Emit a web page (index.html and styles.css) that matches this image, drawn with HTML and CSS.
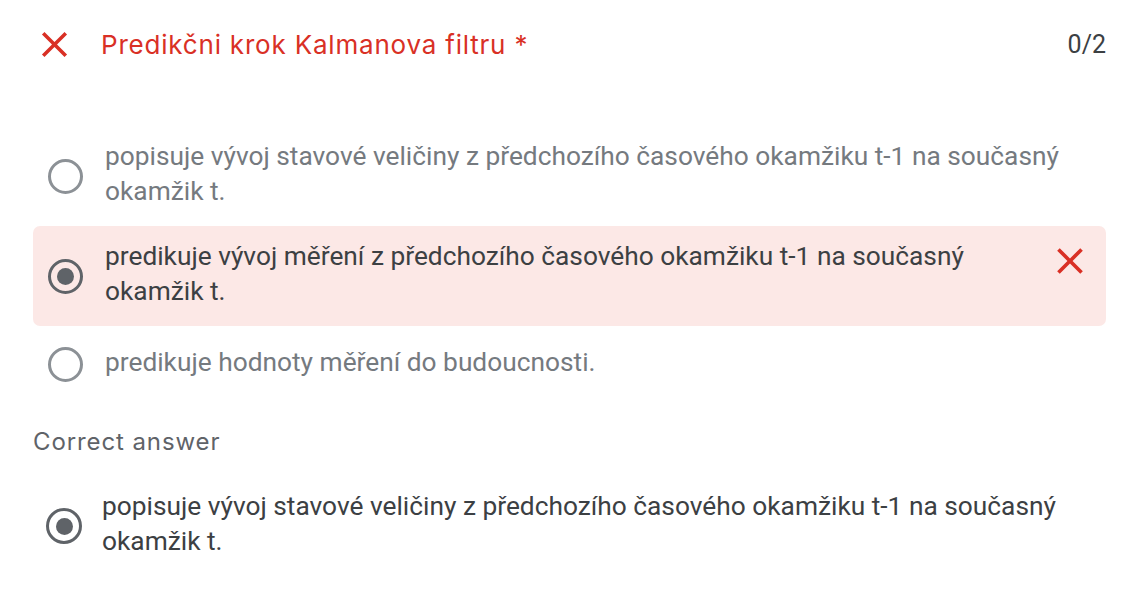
FILE: index.html
```html
<!DOCTYPE html>
<html lang="cs">
<head>
<meta charset="utf-8">
<title>Predikční krok Kalmanova filtru</title>
<link rel="stylesheet" href="styles.css">
</head>
<body>
<div class="card">
  <div class="header">
    <svg class="x-icon" viewBox="0 0 24 24" width="43" height="43"><path d="M19 6.41 17.59 5 12 10.59 6.41 5 5 6.41 10.59 12 5 17.59 6.41 19 12 13.41 17.59 19 19 17.59 13.41 12z" fill="#d93025"/></svg>
    <div class="title">Predikčni krok Kalmanova filtru *</div>
    <div class="score">0/2</div>
  </div>

  <div class="options">
    <div class="option">
      <span class="radio"></span>
      <div class="label muted">popisuje vývoj stavové veličiny z předchozího časového okamžiku t-1 na současný okamžik t.</div>
    </div>
    <div class="option wrong">
      <span class="radio checked"></span>
      <div class="label">predikuje vývoj měření z předchozího časového okamžiku t-1 na současný okamžik t.</div>
      <svg class="x-icon small" viewBox="0 0 24 24" width="44" height="44"><path d="M19 6.41 17.59 5 12 10.59 6.41 5 5 6.41 10.59 12 5 17.59 6.41 19 12 13.41 17.59 19 19 17.59 13.41 12z" fill="#d93025"/></svg>
    </div>
    <div class="option last">
      <span class="radio"></span>
      <div class="label muted">predikuje hodnoty měření do budoucnosti.</div>
    </div>
  </div>

  <div class="correct-title">Correct answer</div>
  <div class="option correct">
    <span class="radio checked"></span>
    <div class="label">popisuje vývoj stavové veličiny z předchozího časového okamžiku t-1 na současný okamžik t.</div>
  </div>
</div>
</body>
</html>
```

FILE: styles.css
```css
* { box-sizing: border-box; }
html, body { margin: 0; padding: 0; background: #fff; }
body { font-family: Roboto, "Noto Sans", sans-serif; color: #202124; }

.card { width: 1121px; padding: 0 15px 0 33px; }

.header {
  display: flex;
  align-items: center;
  height: 88px;
}
.header .x-icon { flex: none; }
.title {
  margin-left: 25px;
  font-family: Inter, "Open Sans", sans-serif;
  font-size: 26px;
  letter-spacing: 0.8px;
  color: #d93025;
  flex: 1;
}
.score {
  font-size: 25px;
  color: #3c4043;
}

.options { margin-top: 51px; }

.option {
  display: flex;
  align-items: center;
  padding: 0 15px;
  border-radius: 7px;
}
.option + .option { margin-top: 17px; }
.option.wrong {
  background: #fce8e6;
  padding-top: 13px;
  padding-bottom: 17px;
  padding-right: 14px;
}

.radio {
  flex: none;
  width: 35px;
  height: 35px;
  margin-top: 4px;
  border-radius: 50%;
  border: 3.5px solid #8c9196;
  display: flex;
  align-items: center;
  justify-content: center;
}
.radio.checked { border-color: #5f6368; }
.radio.checked::after {
  content: "";
  width: 17px;
  height: 17px;
  border-radius: 50%;
  background: #5f6368;
}

.label {
  margin-left: 22px;
  font-size: 26.3px;
  line-height: 35px;
  width: 955px;
  color: #3c4043;
}
.label.muted { color: #757a7f; }
.option.wrong .label { width: auto; flex: 1; }
.option .x-icon.small {
  flex: none;
  align-self: flex-start;
}

.correct-title {
  margin-top: 45px;
  font-family: Inter, "Open Sans", sans-serif;
  font-size: 24px;
  letter-spacing: 0.9px;
  line-height: 30px;
  color: #5f6368;
}
.option.correct { margin-top: 32px; padding-left: 13px; }
.option.correct .radio { width: 36px; height: 36px; }
.option.correct .label { margin-left: 20px; }
```
